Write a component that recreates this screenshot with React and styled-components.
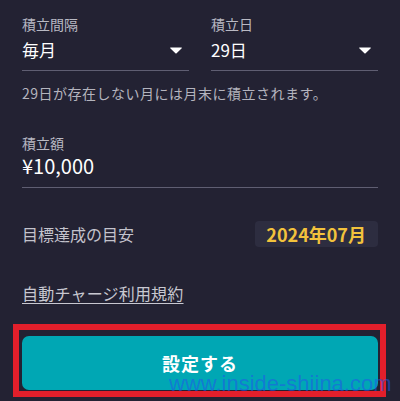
import React from "react"
import styled, { createGlobalStyle } from "styled-components"

const GlobalStyle = createGlobalStyle`
  body {
    margin: 0;
    background: #232233;
    font-family: "Noto Sans CJK JP", "Noto Sans", sans-serif;
  }
`

const Page = styled.div`
  position: relative;
  width: 400px;
  height: 401px;
  box-sizing: border-box;
  padding: 15px 22px 0;
  background: #232233;
  overflow: hidden;
  display: flex;
  flex-direction: column;
`

const Columns = styled.div`
  display: grid;
  grid-template-columns: 1fr 1fr;
  column-gap: 22px;
`

const Field = styled.div`
  display: flex;
  flex-direction: column;
  margin-top: ${(p) => p.$top || 0}px;
`

const Label = styled.div`
  font-size: 14px;
  line-height: 18px;
  color: #b9b9c3;
`

const ValueRow = styled.div`
  display: flex;
  align-items: center;
  justify-content: space-between;
  margin-top: ${(p) => p.$gap || 0}px;
  padding-bottom: 8px;
  border-bottom: 1px solid #5f5e72;
  color: #ffffff;
  font-size: ${(p) => p.$size || 17}px;
  line-height: ${(p) => p.$line || 24}px;
`

const Caret = styled.svg`
  width: 12px;
  height: 7px;
  margin-right: 7px;
`

const Note = styled.p`
  margin: 12px 0 0;
  font-size: 14px;
  line-height: 20px;
  letter-spacing: 0.5px;
  color: #b4b4be;
`

const GoalRow = styled.div`
  display: flex;
  align-items: center;
  justify-content: space-between;
  margin-top: 33px;
`

const GoalLabel = styled.span`
  font-size: 16px;
  line-height: 22px;
  color: #c3c3cc;
`

const GoalBadge = styled.span`
  height: 26px;
  padding: 0 12px 0 11px;
  border-radius: 4px;
  background: #2d2d40;
  color: #f2c23c;
  font-size: 18px;
  font-weight: 700;
  line-height: 26px;
`

const Terms = styled.a`
  align-self: flex-start;
  margin-top: 35px;
  font-size: 16px;
  line-height: 22px;
  letter-spacing: 0.2px;
  color: #c8c8d1;
  text-decoration: underline;
  text-underline-offset: 3px;
  text-decoration-thickness: 1px;
`

const Highlight = styled.div`
  position: relative;
  z-index: 1;
  margin: 20px -8px 0 -9px;
  padding: 6px 2px 1px 3px;
  border: 6px solid #e21f2b;
`

const SubmitButton = styled.button`
  display: block;
  width: 100%;
  height: 54px;
  border: none;
  border-radius: 7px;
  background: #00a7b4;
  color: #ffffff;
  font-family: "Noto Sans CJK JP", "Noto Sans", sans-serif;
  font-size: 18px;
  font-weight: 700;
  letter-spacing: 1px;
`

const Watermark = styled.span`
  position: absolute;
  z-index: 2;
  left: 169px;
  top: 373px;
  font-family: "Liberation Sans", Arial, sans-serif;
  font-size: 22px;
  line-height: 22px;
  color: rgba(35, 85, 235, 0.55);
  white-space: nowrap;
  pointer-events: none;
`

function DownCaret() {
  return (
    <Caret viewBox="0 0 12 7">
      <path d="M0.6 0.5h10.8a0.5 0.5 0 0 1 0.35 0.85L6.35 6.4a0.5 0.5 0 0 1-0.7 0L0.25 1.35A0.5 0.5 0 0 1 0.6 0.5z" fill="#ffffff" />
    </Caret>
  )
}

export default function App() {
  return (
    <>
      <GlobalStyle />
      <Page>
        <Columns>
          <Field>
            <Label>積立間隔</Label>
            <ValueRow $gap={5}>
              <span>毎月</span>
              <DownCaret />
            </ValueRow>
          </Field>
          <Field>
            <Label>積立日</Label>
            <ValueRow $gap={5}>
              <span>29日</span>
              <DownCaret />
            </ValueRow>
          </Field>
        </Columns>

        <Note>29日が存在しない月には月末に積立されます。</Note>

        <Field $top={31}>
          <Label>積立額</Label>
          <ValueRow $gap={1} $size={20} $line={26}>
            <span>¥10,000</span>
          </ValueRow>
        </Field>

        <GoalRow>
          <GoalLabel>目標達成の目安</GoalLabel>
          <GoalBadge>2024年07月</GoalBadge>
        </GoalRow>

        <Terms>自動チャージ利用規約</Terms>

        <Highlight>
          <SubmitButton>設定する</SubmitButton>
        </Highlight>

        <Watermark>www.inside-shiina.com</Watermark>
      </Page>
    </>
  )
}
